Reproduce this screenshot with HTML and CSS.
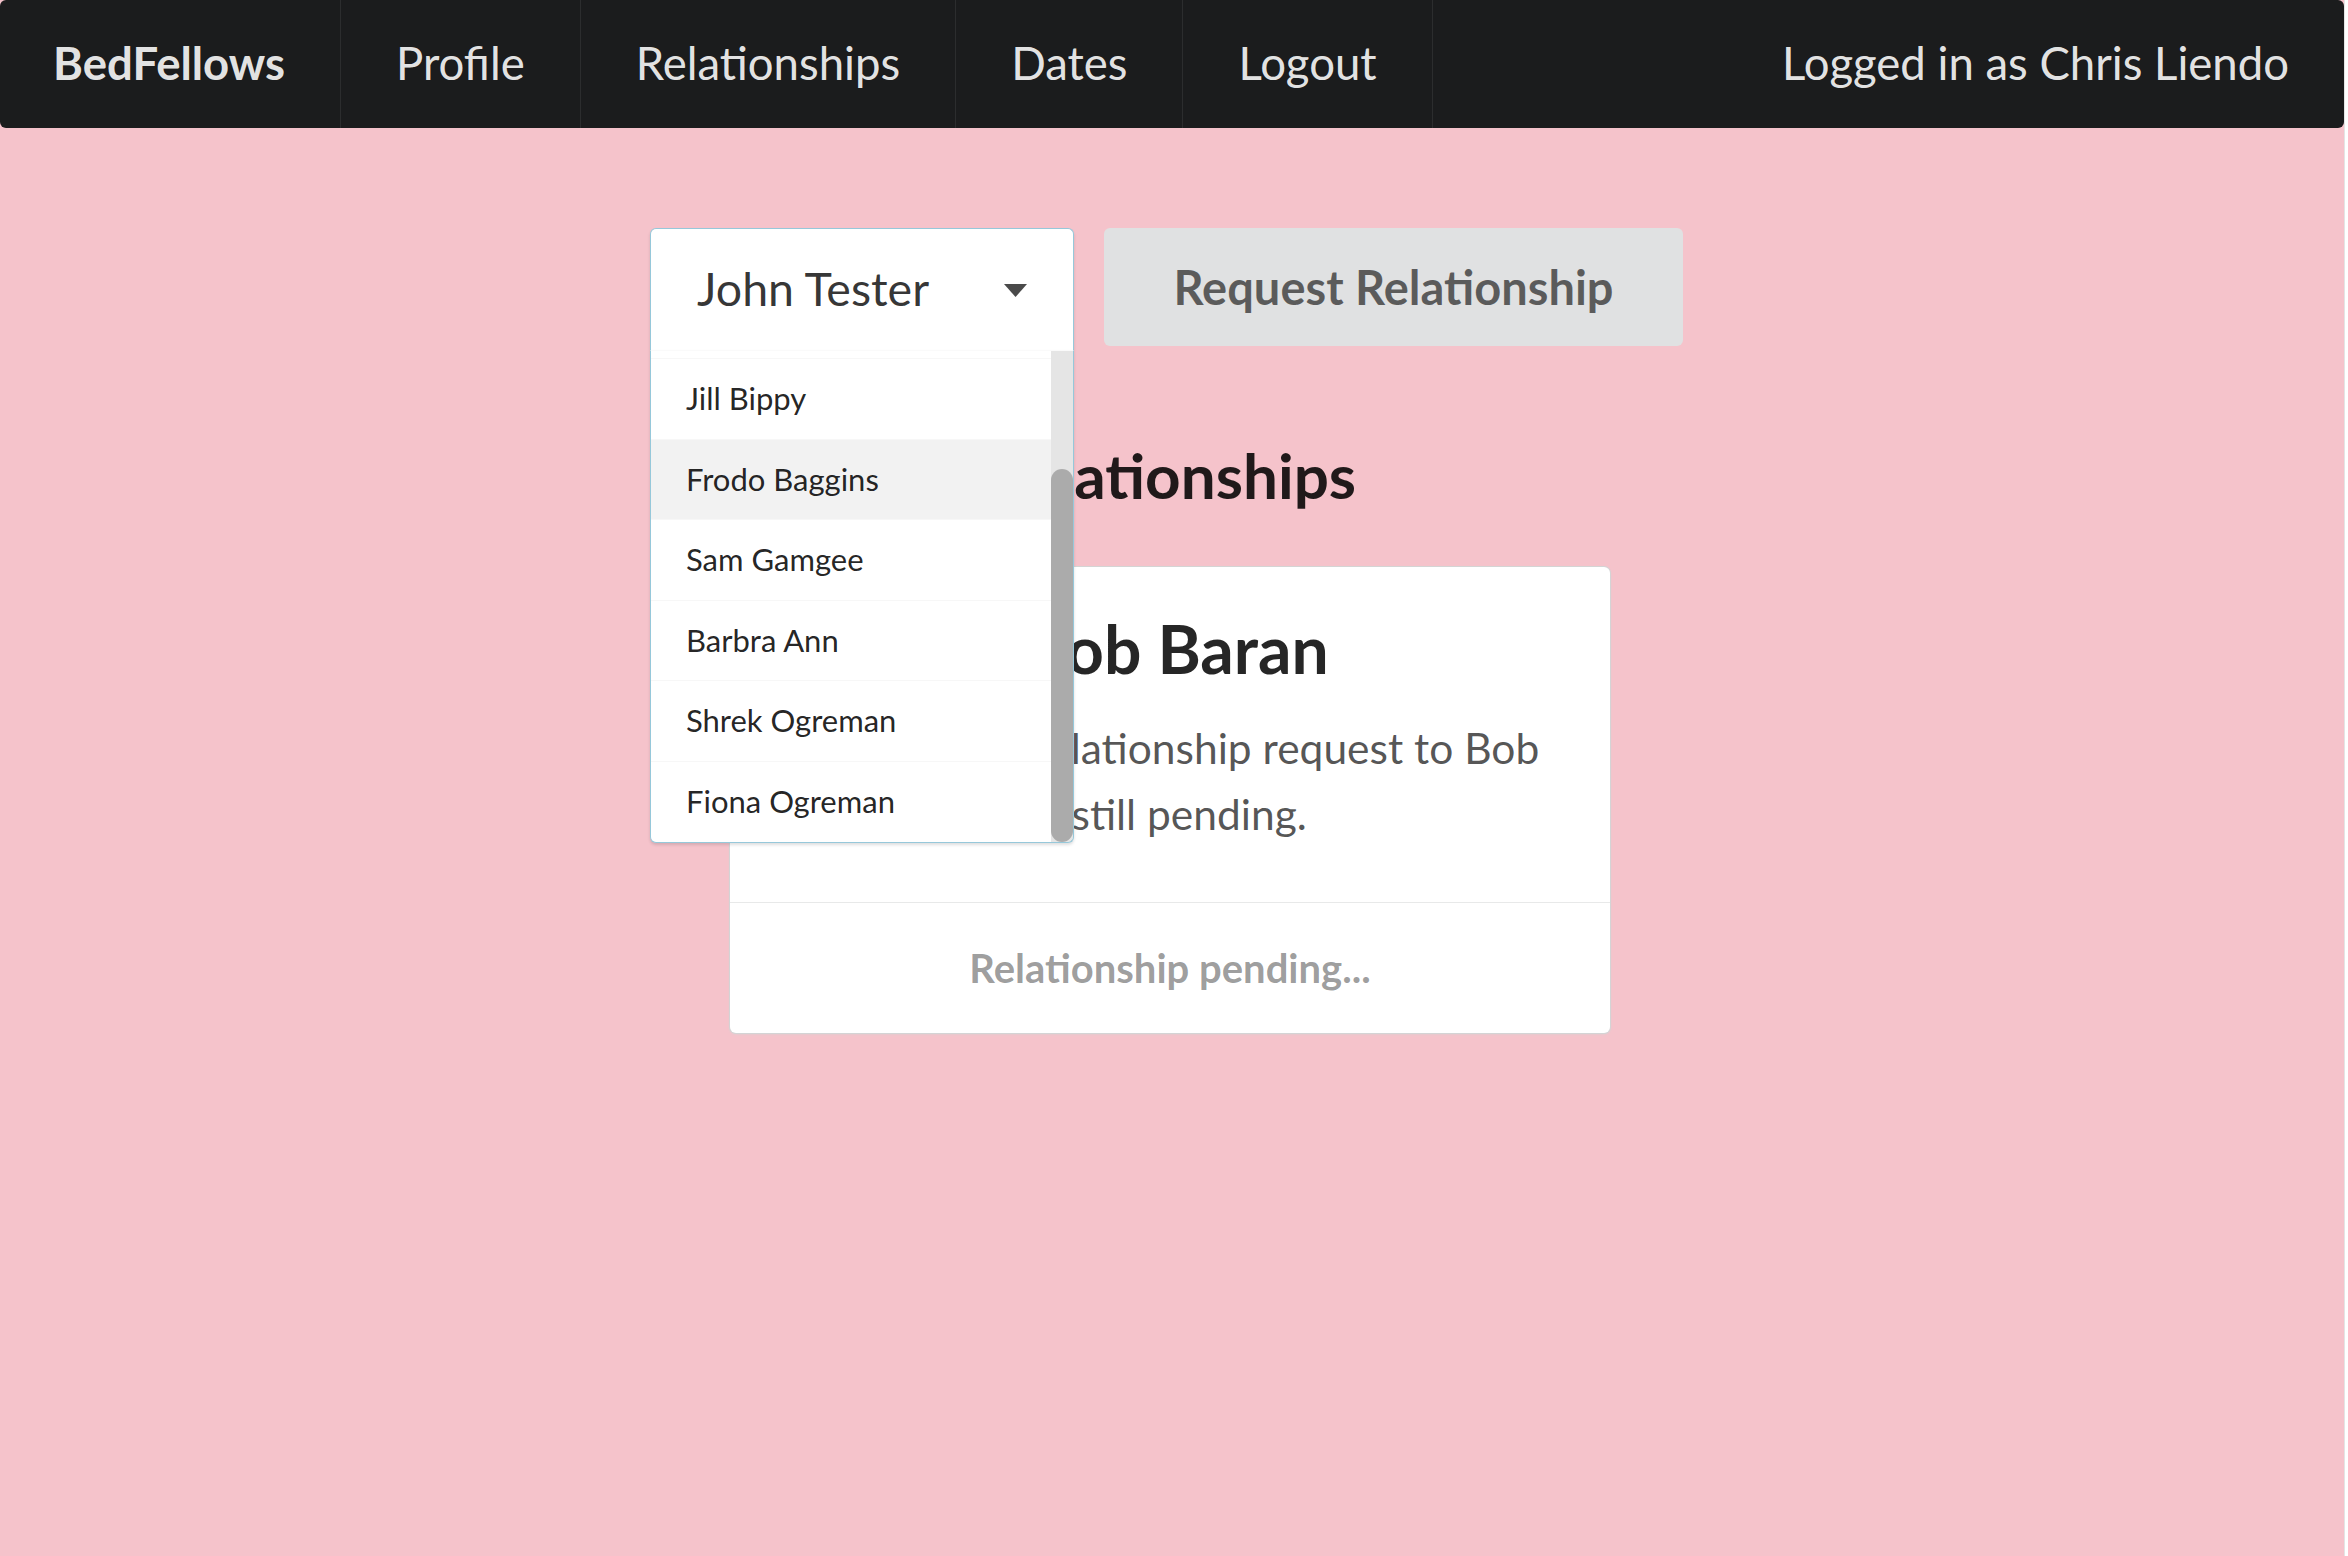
FILE: index.html
```html
<!DOCTYPE html>
<html lang="en">
<head>
<meta charset="utf-8">
<title>BedFellows - Relationships</title>
<link rel="stylesheet" href="styles.css">
</head>
<body>
<div class="app">
  <nav class="topbar">
    <a class="nav-item brand">BedFellows</a>
    <a class="nav-item">Profile</a>
    <a class="nav-item">Relationships</a>
    <a class="nav-item">Dates</a>
    <a class="nav-item">Logout</a>
    <div class="nav-item nav-right">Logged in as Chris Liendo</div>
  </nav>

  <main class="content">
    <div class="request-row">
      <div class="dropdown">
        <div class="dropdown-text">John Tester</div>
        <svg class="caret" width="23" height="13" viewBox="0 0 23 13"><path d="M0 0 H23 L11.5 13 Z" fill="#4a4a4a"/></svg>
        <div class="dropdown-menu">
          <div class="menu-list">
            <div class="menu-item-partial"></div>
            <div class="menu-item">Jill Bippy</div>
            <div class="menu-item hovered">Frodo Baggins</div>
            <div class="menu-item">Sam Gamgee</div>
            <div class="menu-item">Barbra Ann</div>
            <div class="menu-item">Shrek Ogreman</div>
            <div class="menu-item">Fiona Ogreman</div>
          </div>
          <div class="scrollbar"><div class="scrollbar-thumb"></div></div>
        </div>
      </div>
      <button class="request-btn">Request Relationship</button>
    </div>

    <h1 class="section-title">Relationships</h1>

    <div class="card">
      <div class="card-content">
        <div class="avatar"></div>
        <div class="card-text">
          <div class="card-header">Bob Baran</div>
          <p class="card-description">Relationship request to Bob is still pending.</p>
        </div>
      </div>
      <div class="card-extra">Relationship pending...</div>
    </div>
  </main>
</div>
</body>
</html>
```

FILE: styles.css
```css
html, body {
  margin: 0;
  padding: 0;
  background: #ffffff;
}

body {
  font-family: "Lato", "Open Sans", "Liberation Sans", sans-serif;
  overflow: hidden;
}

.app {
  margin-right: 4px;
  min-height: 100vh;
  background: #f5c3cb;
  box-shadow: 1px 0 0 #e4e4e4;
}

/* ---------- top menu ---------- */
.topbar {
  display: flex;
  align-items: stretch;
  height: 128px;
  background: #1b1c1d;
  border-radius: 6px;
}

.nav-item {
  display: flex;
  align-items: center;
  padding: 0 55px 4px;
  font-size: 45.5px;
  color: rgba(255, 255, 255, 0.9);
  border-right: 1px solid rgba(255, 255, 255, 0.08);
  white-space: nowrap;
}

.nav-item.brand {
  font-weight: 700;
  padding-left: 53px;
}

.nav-item.nav-right {
  margin-left: auto;
  border-right: none;
  padding-right: 55px;
}

/* ---------- content ---------- */
.content {
  padding-top: 100px;
  padding-bottom: 40px;
}

.request-row {
  display: flex;
  justify-content: center;
  align-items: flex-start;
  gap: 30px;
}

.dropdown {
  position: relative;
  z-index: 10;
  box-sizing: border-box;
  width: 424px;
  height: 122px;
  background: #ffffff;
  border: 1px solid #96c8da;
  border-bottom: none;
  border-radius: 6px 6px 0 0;
  box-shadow: 0 2px 3px 0 rgba(34, 36, 38, 0.15);
}

.dropdown-text {
  padding-left: 46px;
  font-size: 46.5px;
  line-height: 119px;
  color: rgba(0, 0, 0, 0.8);
}

.caret {
  position: absolute;
  top: 55px;
  right: 46px;
}

.dropdown-menu {
  position: absolute;
  top: 100%;
  left: -1px;
  right: -1px;
  display: flex;
  background: #ffffff;
  border: 1px solid #96c8da;
  border-top: 1px solid #fafafa;
  border-radius: 0 0 6px 6px;
  box-shadow: 0 2px 3px 0 rgba(34, 36, 38, 0.15);
  overflow: hidden;
}

.menu-list {
  flex: 1;
}

.menu-item-partial {
  height: 7px;
}

.menu-item {
  padding: 24px 35px;
  font-size: 31px;
  line-height: 31.6px;
  color: rgba(0, 0, 0, 0.87);
  border-top: 1px solid #f7f7f7;
}

.menu-item.hovered {
  background: #f2f2f2;
}

.scrollbar {
  position: relative;
  width: 22px;
  flex-shrink: 0;
  background: rgba(0, 0, 0, 0.1);
}

.scrollbar-thumb {
  position: absolute;
  left: 0;
  right: 0;
  bottom: 0;
  height: 373px;
  border-radius: 11px;
  background: rgba(0, 0, 0, 0.25);
}

.request-btn {
  box-sizing: border-box;
  width: 579px;
  height: 118px;
  margin: 0 11px 0 0;
  padding: 0;
  border: none;
  border-radius: 6px;
  background: #e0e1e2;
  color: rgba(0, 0, 0, 0.6);
  font-family: inherit;
  font-size: 47px;
  font-weight: 700;
}

.section-title {
  margin: 89px 0 0;
  font-size: 62px;
  line-height: 72px;
  font-weight: 700;
  text-align: center;
  color: rgba(0, 0, 0, 0.87);
}

/* ---------- card ---------- */
.card {
  width: 880px;
  margin: 56px 0 0 calc(50% - 442px);
  background: #ffffff;
  border-radius: 6px;
  box-shadow: 0 1px 3px 0 #d4d4d5, 0 0 0 1px #d4d4d5;
}

.card-content {
  display: flex;
  align-items: flex-start;
  padding: 40px 31px 55px;
}

.avatar {
  flex-shrink: 0;
  width: 210px;
  height: 210px;
  margin-right: 52px;
  border-radius: 50%;
  background: #e8e8e8;
}

.card-text {
  flex: 1;
}

.card-header {
  font-size: 66px;
  line-height: 84px;
  font-weight: 700;
  color: rgba(0, 0, 0, 0.85);
}

.card-description {
  max-width: 530px;
  margin: 24px 0 0;
  padding-left: 9px;
  text-indent: -9px;
  font-size: 42.5px;
  line-height: 66px;
  color: rgba(0, 0, 0, 0.68);
}

.card-extra {
  border-top: 1px solid rgba(34, 36, 38, 0.1);
  height: 130px;
  line-height: 130px;
  text-align: center;
  font-size: 40px;
  font-weight: 700;
  color: rgba(0, 0, 0, 0.4);
}
```
